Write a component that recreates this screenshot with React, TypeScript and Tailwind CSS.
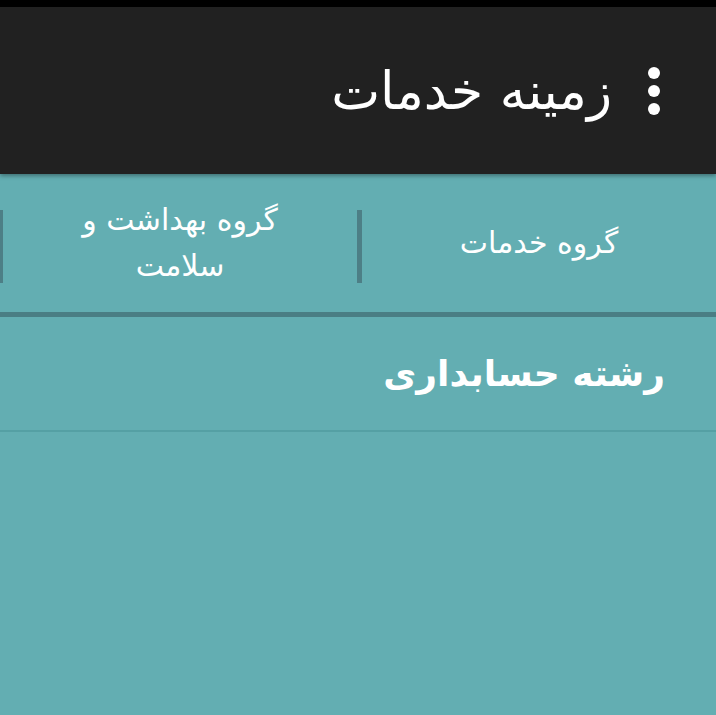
export default function App() {
  const font = { fontFamily: '"DejaVu Sans", sans-serif' }
  return (
    <div dir="rtl" style={font} className="flex h-[715px] w-[716px] flex-col overflow-hidden bg-[#63aeb2]">
      <div className="h-[7px] bg-black" />
      {/* toolbar */}
      <header className="relative z-10 flex h-[167px] items-center gap-[36px] bg-[#212121] pr-[56px] shadow-[0_2px_4px_rgba(0,0,0,0.35)]">
        <div className="flex flex-col gap-[6px]">
          <span className="h-[12px] w-[12px] rounded-full bg-white" />
          <span className="h-[12px] w-[12px] rounded-full bg-white" />
          <span className="h-[12px] w-[12px] rounded-full bg-white" />
        </div>
        <h1 className="text-[52px] leading-none text-white">زمینه خدمات</h1>
      </header>
      {/* tabs */}
      <div className="flex h-[138px] items-center">
        <div className="flex h-full w-[354px] shrink-0 items-center justify-center text-center text-[30px] leading-[46px] text-white">
          گروه خدمات
        </div>
        <div className="mt-[6px] h-[73px] w-[5px] shrink-0 bg-[#4d7f86]" />
        <div className="flex h-full w-[354px] shrink-0 items-center justify-center text-center text-[30px] leading-[46px] text-white">
          گروه بهداشت و
          <br />
          سلامت
        </div>
        <div className="mt-[6px] h-[73px] w-[5px] shrink-0 bg-[#4d7f86]" />
      </div>
      <div className="h-[5px] bg-[#4a7e84]" />
      {/* list */}
      <div className="flex h-[115px] items-center border-b-2 border-[#55a0a4] pr-[51px]">
        <span className="text-[36px] font-bold text-white">رشته حسابداری</span>
      </div>
    </div>
  )
}
